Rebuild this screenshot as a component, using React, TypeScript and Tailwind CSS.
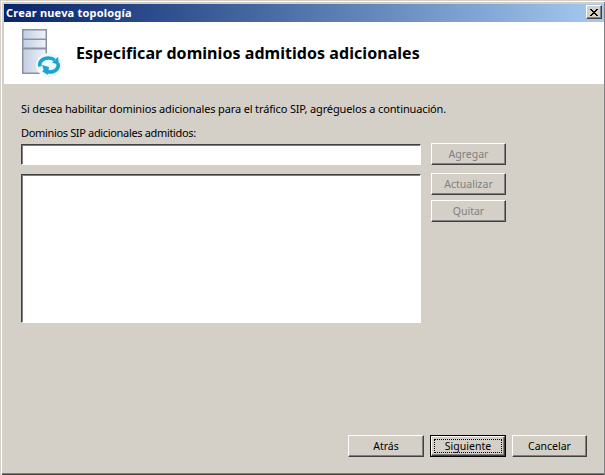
const font = "[font-family:'Noto_Sans','Liberation_Sans',sans-serif]";

function WinButton({ label, disabled, focused, className = "" }: { label: string; disabled?: boolean; focused?: boolean; className?: string }) {
  if (focused) {
    return (
      <div className={`border border-black ${className}`}>
        <div className="h-[20px] border border-b-[#404040] border-r-[#404040] border-l-white border-t-white bg-[#d4d0c8] p-[2px] shadow-[inset_-1px_-1px_0_#808080]">
          <div className="flex h-full items-center justify-center border border-dotted border-black pt-[1px] text-[10.5px] text-black">{label}</div>
        </div>
      </div>
    );
  }
  return (
    <div
      className={`flex h-[22px] items-center justify-center border border-b-[#404040] border-r-[#404040] border-l-white border-t-white bg-[#d4d0c8] pt-[1px] text-[10.5px] shadow-[inset_-1px_-1px_0_#808080] ${disabled ? "text-[#808080]" : "text-black"} ${className}`}
    >
      {label}
    </div>
  );
}

function SunkenBox({ className = "" }: { className?: string }) {
  return <div className={`border border-b-white border-r-white border-l-[#404040] border-t-[#404040] bg-white shadow-[inset_1px_1px_0_#808080] ${className}`} />;
}

export default function App() {
  return (
    <div className={`flex h-[475px] w-[605px] flex-col overflow-hidden bg-[#d4d0c8] pl-[4px] pt-[4px] pr-[1px] pb-[2px] shadow-[inset_1px_1px_0_#d4d0c8,inset_2px_2px_0_#ffffff,inset_-1px_0_0_#808080,inset_0_-1px_0_#404040,inset_0_-2px_0_#808080] ${font}`}>
      <div className="flex h-[18px] shrink-0 justify-between bg-gradient-to-r from-[#0a246a] to-[#a6caf0] pl-[2px] pr-[2px]">
        <span className="mt-[3px] text-[11px] font-bold leading-[11px] tracking-[0.2px] text-white">Crear nueva topología</span>
        <div className="mt-[1px] flex h-[14px] w-[16px] items-center justify-center border border-b-[#404040] border-r-[#404040] border-l-white border-t-white bg-[#d4d0c8] shadow-[inset_-1px_-1px_0_#808080]">
          <svg width="8" height="7" viewBox="0 0 8 7">
            <path d="M0 0h2v1h1v1h2V1h1V0h2v1H7v1H6v1H5v1h1v1h1v1h1v1H6V6H5V5H3v1H2v1H0V6h1V5h1V4h1V3H2V2H1V1H0z" fill="#000" />
          </svg>
        </div>
      </div>

      <div className="flex h-[62px] shrink-0 items-center bg-white pl-[18px]">
        <svg width="42" height="50" viewBox="0 0 42 50" className="shrink-0">
          <defs>
            <linearGradient id="srv" x1="0" y1="0" x2="1" y2="0">
              <stop offset="0" stopColor="#c3cfe6" />
              <stop offset="1" stopColor="#edf1fa" />
            </linearGradient>
          </defs>
          <rect x="0" y="1" width="25" height="45" fill="#8c929c" />
          <rect x="1.5" y="2.500" width="22" height="8" fill="url(#srv)" />
          <rect x="1.5" y="12" width="22" height="7.500" fill="url(#srv)" />
          <rect x="1.5" y="21.500" width="22" height="23" fill="url(#srv)" />
          <ellipse cx="27" cy="37" rx="13" ry="12" fill="#eef9fc" />
          <path d="M18 38.500c-1.500-5 3-8.500 8.500-8.500 2.500 0 4.500.5 6 2" fill="none" stroke="#1ea3cc" strokeWidth="3.500" />
          <path d="M30 34.500 L37 37 L36 29 z" fill="#1ea3cc" />
          <path d="M36 35.500c1.500 5-3 8.500-8.500 8.500-2.500 0-4.500-.5-6-2" fill="none" stroke="#1ea3cc" strokeWidth="3.500" />
          <path d="M27 39 L20 37 L22.500 44.500 L26 47 z" fill="#1ea3cc" />
        </svg>
        <h1 className="ml-[12px] text-[16px] font-bold leading-none tracking-[0.05px] text-black">Especificar dominios admitidos adicionales</h1>
      </div>

      <div className="flex min-h-0 flex-1 flex-col pl-[17px] pr-[17px]">
        <p className="mt-[18px] text-[11px] leading-[14px] tracking-[-0.14px] text-black">Si desea habilitar dominios adicionales para el tráfico SIP, agréguelos a continuación.</p>
        <label className="mt-[10px] text-[11px] leading-[14px] tracking-[-0.34px] text-black">Dominios SIP adicionales admitidos:</label>
        <div className="mt-[3px] flex gap-[10px]">
          <div className="mt-[1px] flex w-[400px] flex-col gap-[9px]">
            <SunkenBox className="h-[21px]" />
            <SunkenBox className="h-[149px]" />
          </div>
          <div className="flex w-[75px] flex-col">
            <WinButton label="Agregar" disabled />
            <WinButton label="Actualizar" disabled className="mt-[8px]" />
            <WinButton label="Quitar" disabled className="mt-[5px]" />
          </div>
        </div>
        <div className="mt-auto mb-[16px] flex justify-end gap-[6px]">
          <WinButton label="Atrás" className="w-[76px]" />
          <WinButton label="Siguiente" focused className="w-[76px]" />
          <WinButton label="Cancelar" className="w-[75px]" />
        </div>
      </div>
    </div>
  );
}
